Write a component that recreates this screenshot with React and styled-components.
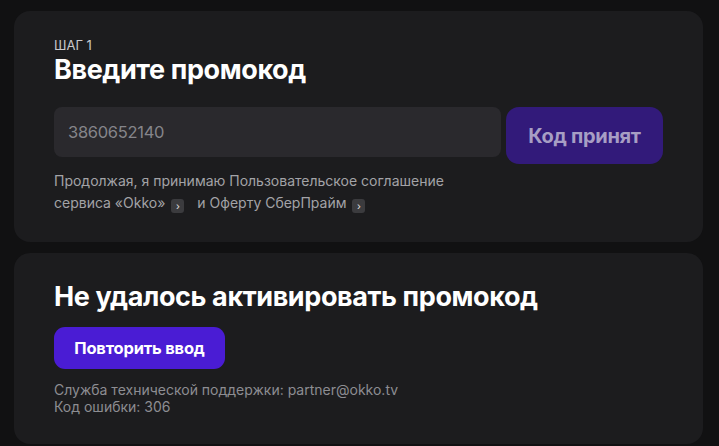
import React from "react";
import styled, { createGlobalStyle } from "styled-components";

const GlobalStyle = createGlobalStyle`
  html, body {
    margin: 0;
    padding: 0;
    background: #111112;
  }
  body {
    font-family: Inter, "Noto Sans", "DejaVu Sans", sans-serif;
    -webkit-font-smoothing: antialiased;
  }
`;

const Page = styled.div`
  display: flex;
  flex-direction: column;
  gap: 11px;
  padding: 11px 16px 0 14px;
  width: 719px;
  height: 446px;
  box-sizing: border-box;
  overflow: hidden;
`;

const Card = styled.section`
  background: #1c1c1e;
  border-radius: 16px;
  padding: ${(p) => p.$pad};
  display: flex;
  flex-direction: column;
`;

const Step = styled.div`
  font-size: 13px;
  line-height: 16px;
  color: #c9c9cc;
`;

const Title = styled.h2`
  margin: 0;
  font-size: 27px;
  line-height: 34px;
  font-weight: 700;
  color: #ffffff;
  letter-spacing: -0.4px;
`;

const Row = styled.div`
  display: flex;
  align-items: flex-start;
  gap: 5px;
  margin-top: 20px;
`;

const Input = styled.div`
  flex: 1;
  height: 50px;
  border-radius: 8px;
  background: #2a292d;
  display: flex;
  align-items: center;
  padding: 0 14px;
  font-size: 16.5px;
  color: #85858a;
  letter-spacing: -0.3px;
`;

const AcceptButton = styled.button`
  width: 157px;
  height: 57px;
  border: none;
  border-radius: 13px;
  background: #321a7a;
  color: #a79ec4;
  font-family: inherit;
  font-size: 20px;
  font-weight: 700;
  letter-spacing: -0.3px;
  padding: 0;
`;

const Legal = styled.p`
  margin: 6px 0 0;
  font-size: 14px;
  line-height: 22px;
  color: #a3a3a7;
`;

const Badge = styled.span`
  display: inline-flex;
  align-items: center;
  justify-content: center;
  width: 13px;
  height: 14px;
  border-radius: 3px;
  background: #3b3b3e;
  color: #e0e0e0;
  font-size: 10px;
  line-height: 1;
  vertical-align: -2px;
  margin-left: ${(p) => p.$ml || "6px"};
  margin-right: ${(p) => p.$mr || "0"};
`;

const RetryButton = styled.button`
  align-self: flex-start;
  margin-top: 13px;
  width: 171px;
  height: 42px;
  border: none;
  border-radius: 11px;
  background: #4a1cd4;
  color: #ffffff;
  font-family: inherit;
  font-size: 16.5px;
  font-weight: 700;
  letter-spacing: -0.2px;
  padding: 0;
`;

const Support = styled.div`
  margin-top: 12px;
  font-size: 14px;
  line-height: 17px;
  color: #8d8d92;
`;

export default function App() {
  return (
    <>
      <GlobalStyle />
      <Page>
        <Card $pad="26px 40px 28px">
          <Step>ШАГ 1</Step>
          <Title>Введите промокод</Title>
          <Row>
            <Input>3860652140</Input>
            <AcceptButton>Код принят</AcceptButton>
          </Row>
          <Legal>
            Продолжая, я принимаю Пользовательское соглашение
            <br />
            сервиса «Okko»
            <Badge $mr="13px">›</Badge>
            и Оферту СберПрайм
            <Badge>›</Badge>
          </Legal>
        </Card>
        <Card $pad="27px 40px 29px">
          <Title>Не удалось активировать промокод</Title>
          <RetryButton>Повторить ввод</RetryButton>
          <Support>
            Служба технической поддержки: partner@okko.tv
            <br />
            Код ошибки: 306
          </Support>
        </Card>
      </Page>
    </>
  );
}
